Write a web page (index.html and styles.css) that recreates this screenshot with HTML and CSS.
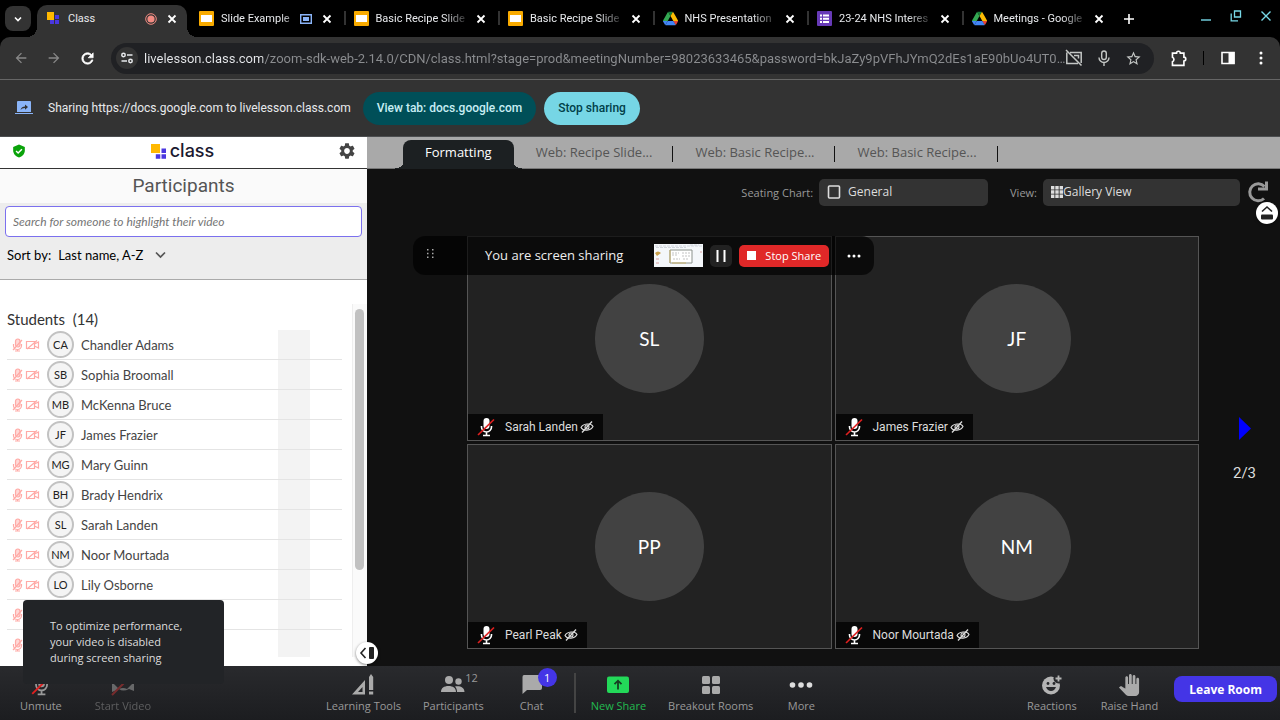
FILE: index.html
```
<!DOCTYPE html>
<html lang="en">
  <head>
    <meta charset="UTF-8" />
    <meta name="viewport" content="width=device-width, initial-scale=1.0" />
    <title>Class</title>
    <link rel="stylesheet" href="styles.css" />
  </head>
  <body>
    <svg class="sprite" aria-hidden="true">
      <symbol id="close" viewBox="0 0 10 10">
        <path d="M1.5 1.5l7 7M8.5 1.5l-7 7" fill="none" stroke="currentColor" stroke-width="1.8" />
      </symbol>
      <symbol id="slides" viewBox="0 0 15 15">
        <rect width="15" height="15" rx="1" fill="#f9ab00" />
        <rect x="2" y="4" width="11" height="7" fill="#fff" />
      </symbol>
      <symbol id="drive" viewBox="0 0 87 78">
        <path d="M6.6 66.85l3.85 6.65c.8 1.4 1.95 2.5 3.3 3.3l13.75-23.8H0c0 1.55.4 3.1 1.2 4.5z" fill="#4285f4" />
        <path d="M43.65 25L29.9 1.2c-1.35.8-2.5 1.9-3.3 3.3L1.2 48.5A9 9 0 0 0 0 53h27.5z" fill="#34a853" />
        <path d="M73.55 76.8c1.35-.8 2.5-1.9 3.3-3.3l8.9-15.5a9 9 0 0 0 1.2-4.5h-27.5l5.85 11.5z" fill="#ea4335" />
        <path d="M43.65 25L57.4 1.2C56.05.4 54.5 0 52.9 0H34.4c-1.6 0-3.15.45-4.5 1.2z" fill="#188038" />
        <path d="M59.8 53H27.5L13.75 76.8c1.35.8 2.9 1.2 4.5 1.2h50.8c1.6 0 3.15-.45 4.5-1.2z" fill="#4285f4" />
        <path d="M73.4 26.5L60.7 4.5c-.8-1.4-1.95-2.5-3.3-3.3L43.65 25 59.8 53h27.45c0-1.55-.4-3.1-1.2-4.5z" fill="#fbbc04" />
      </symbol>
      <symbol id="mic-off" viewBox="0 0 18 20">
        <rect x="6.500" y="1" width="6" height="11" rx="3" fill="currentColor" />
        <path d="M4.500 9v1a5 5 0 0 0 10 0V9M9.500 15v3M6 18.500h7" fill="none" stroke="currentColor" stroke-width="1.600" />
        <path d="M1 18L17 2.500" stroke="#e02020" stroke-width="1.700" />
      </symbol>
      <symbol id="eye-off" viewBox="0 0 14 12">
        <path d="M1 6.500C3 2.500 11 1.500 13 5.500 11 10 3 10.500 1 6.500z" fill="none" stroke="currentColor" stroke-width="1.100" />
        <circle cx="7" cy="6" r="2" fill="none" stroke="currentColor" stroke-width="1.100" />
        <path d="M2 11.500L12 .5" stroke="currentColor" stroke-width="1.300" />
      </symbol>
      <symbol id="muted" viewBox="0 0 28 14">
        <g fill="none" stroke="#ffaaa6" stroke-width="1.200">
          <rect x="3.500" y="1" width="4.500" height="8" rx="2.200" fill="#ffd9d7" />
          <path d="M1.500 6v1.500a4 4 0 0 0 8 0V6M5.500 11.500V13M3 13h5M1 12L10 2" />
          <path d="M14.500 3.500h8v7h-8zM22.500 6l4-2v6l-4-2M15 11L25 2.500" />
        </g>
      </symbol>
    </svg>

    <header class="browser">
      <div class="tabstrip">
        <button class="tab-search" aria-label="Search tabs">
          <svg width="10" height="10" viewBox="0 0 10 10"><path d="M2 3.500l3 3 3-3" fill="none" stroke="#fff" stroke-width="1.600" /></svg>
        </button>
        <div class="tabs">
          <div class="tab active">
            <svg class="favicon" viewBox="0 0 15 15">
              <path d="M1 1h7v8H1z" fill="#ffb800" /><path d="M9 4h4v4H9zM9 9h4v4H9zM4 9h4v4H4z" fill="#4a37e0" />
            </svg>
            <span class="tab-title">Class</span>
            <svg width="12" height="12" viewBox="0 0 12 12"><circle cx="6" cy="6" r="5.300" fill="none" stroke="#f28b82" /><circle cx="6" cy="6" r="3.600" fill="#f28b82" /></svg>
            <button class="tab-close" aria-label="Close tab"><svg width="10" height="10"><use href="#close" /></svg></button>
          </div>
          <div class="tab">
            <svg class="favicon"><use href="#slides" /></svg>
            <span class="tab-title">Slide Example</span>
            <svg width="12" height="10" viewBox="0 0 12 10"><path d="M.7.700h10.600v8.600H.7z" fill="none" stroke="#8ab4f8" stroke-width="1.400" /><path d="M3 3h6v4H3z" fill="#8ab4f8" /></svg>
            <button class="tab-close" aria-label="Close tab"><svg width="10" height="10"><use href="#close" /></svg></button>
          </div>
          <div class="tab">
            <svg class="favicon"><use href="#slides" /></svg>
            <span class="tab-title">Basic Recipe Slide</span>
            <button class="tab-close" aria-label="Close tab"><svg width="10" height="10"><use href="#close" /></svg></button>
          </div>
          <div class="tab">
            <svg class="favicon"><use href="#slides" /></svg>
            <span class="tab-title">Basic Recipe Slide</span>
            <button class="tab-close" aria-label="Close tab"><svg width="10" height="10"><use href="#close" /></svg></button>
          </div>
          <div class="tab">
            <svg class="favicon"><use href="#drive" /></svg>
            <span class="tab-title">NHS Presentation</span>
            <button class="tab-close" aria-label="Close tab"><svg width="10" height="10"><use href="#close" /></svg></button>
          </div>
          <div class="tab">
            <svg class="favicon" viewBox="0 0 15 15"><rect width="15" height="15" rx="1" fill="#673ab7" /><path d="M3 3.500h2v2H3zM6 3.500h6v2H6zM3 6.700h2v2H3zM6 6.700h6v2H6zM3 10h2v2H3zM6 10h6v2H6z" fill="#fff" /></svg>
            <span class="tab-title">23-24 NHS Interes</span>
            <button class="tab-close" aria-label="Close tab"><svg width="10" height="10"><use href="#close" /></svg></button>
          </div>
          <div class="tab">
            <svg class="favicon"><use href="#drive" /></svg>
            <span class="tab-title">Meetings - Google</span>
            <button class="tab-close" aria-label="Close tab"><svg width="10" height="10"><use href="#close" /></svg></button>
          </div>
        </div>
        <button class="new-tab" aria-label="New tab">
          <svg width="10" height="10" viewBox="0 0 10 10"><path d="M5 0v10M0 5h10" stroke="#fff" stroke-width="1.600" /></svg>
        </button>
        <div class="window-controls">
          <button aria-label="Minimize"><svg width="12" height="12" viewBox="0 0 12 12"><path d="M1 10h10" stroke="#78d9e8" stroke-width="1.400" /></svg></button>
          <button aria-label="Restore"><svg width="12" height="12" viewBox="0 0 12 12"><path d="M4.500 1h6v6h-6zM1.200 3.500v7.300H8" fill="none" stroke="#78d9e8" stroke-width="1.300" /></svg></button>
          <button aria-label="Close"><svg width="12" height="12" viewBox="0 0 12 12"><path d="M1.500 1.500l9 9M10.500 1.500l-9 9" stroke="#78d9e8" stroke-width="1.400" /></svg></button>
        </div>
      </div>

      <div class="toolbar">
        <button class="nav dim" aria-label="Back"><svg width="16" height="16" viewBox="0 0 24 24"><path d="M20 11H7.830l5.590-5.590L12 4l-8 8 8 8 1.410-1.410L7.830 13H20v-2z" fill="currentColor" /></svg></button>
        <button class="nav dim" aria-label="Forward"><svg width="16" height="16" viewBox="0 0 24 24"><path d="M4 11h12.170l-5.590-5.590L12 4l8 8-8 8-1.410-1.410L16.170 13H4v-2z" fill="currentColor" /></svg></button>
        <button class="nav" aria-label="Reload"><svg width="17" height="17" viewBox="0 0 24 24"><path d="M17.650 6.350C16.200 4.900 14.210 4 12 4c-4.420 0-7.990 3.580-7.990 8s3.570 8 7.990 8c3.730 0 6.840-2.550 7.730-6h-2.080c-.82 2.330-3.040 4-5.650 4-3.310 0-6-2.690-6-6s2.690-6 6-6c1.660 0 3.140.69 4.220 1.780L13 11h7V4l-2.350 2.350z" fill="currentColor" stroke="currentColor" /></svg></button>
        <div class="omnibox">
          <button class="site-info" aria-label="Site information">
            <svg width="14" height="14" viewBox="0 0 14 14" fill="none" stroke="#e8eaed" stroke-width="1.500"><circle cx="3.500" cy="4" r="1.700" /><path d="M7 4h5.500M1.500 10H7" /><circle cx="10.500" cy="10" r="1.700" /></svg>
          </button>
          <input class="url" type="text" aria-label="Address" value="livelesson.class.com/zoom-sdk-web-2.14.0/CDN/class.html?stage=prod&amp;meetingNumber=98023633465&amp;password=bkJaZy9pVFhJYmQ2dEs1aE90bUo4UT0…" />
          <button aria-label="Camera blocked"><svg width="18" height="18" viewBox="0 0 18 18" fill="none" stroke="currentColor" stroke-width="1.500"><path d="M5 3.500h11.200V14M13 14.500H1.800v-11M1 1l15.500 15.500M9 6.500h4.500v3" /></svg></button>
          <button aria-label="Microphone"><svg width="18" height="18" viewBox="0 0 18 18" fill="none" stroke="currentColor" stroke-width="1.400"><rect x="6.700" y="2" width="4.600" height="8.500" rx="2.300" /><path d="M4 8.500a5 5 0 0 0 10 0M9 13.500V17" /></svg></button>
          <button aria-label="Bookmark"><svg width="17" height="17" viewBox="0 0 24 24"><path d="M22 9.240l-7.190-.62L12 2 9.190 8.630 2 9.240l5.460 4.730L5.820 21 12 17.270 18.180 21l-1.630-7.030L22 9.240zM12 15.400l-3.760 2.270 1-4.280-3.320-2.880 4.380-.38L12 6.100l1.710 4.040 4.380.38-3.320 2.880 1 4.280L12 15.400z" fill="currentColor" /></svg></button>
        </div>
        <button class="nav" aria-label="Extensions"><svg width="18" height="18" viewBox="0 0 22 22"><path d="M3 5h5a2.300 2.300 0 0 1 4.600 0H17v5a2.300 2.300 0 0 1 0 4.600V20H3v-4.500a3 3 0 0 0 0-5.500z" fill="none" stroke="currentColor" stroke-width="2" /></svg></button>
        <span class="toolbar-sep"></span>
        <button class="nav" aria-label="Side panel"><svg width="14" height="14" viewBox="0 0 14 14"><path d="M1 1.500h12v11H1z" fill="none" stroke="currentColor" stroke-width="1.600" /><path d="M7.500 1h6v12h-6z" fill="currentColor" /></svg></button>
        <button class="nav" aria-label="Menu"><svg width="4" height="14" viewBox="0 0 4 14" fill="currentColor"><circle cx="2" cy="2" r="1.500" /><circle cx="2" cy="7" r="1.500" /><circle cx="2" cy="12" r="1.500" /></svg></button>
      </div>

      <div class="infobar">
        <svg width="18" height="14" viewBox="0 0 18 14"><path d="M3 0h12q1 0 1 1v10H2V1q0-1 1-1zM0 12h18v1H0z" fill="#8ab4f8" /><path d="M5.500 9C6 6.500 8 5.500 10 5.500V3.500L13 6l-3 2.700V7C8 7 6.500 7.800 5.500 9z" fill="#333" /></svg>
        <span class="infobar-text">Sharing https://docs.google.com to livelesson.class.com</span>
        <button class="pill view-tab">View tab: docs.google.com</button>
        <button class="pill stop-sharing">Stop sharing</button>
      </div>
    </header>

    <main class="app">
      <aside class="sidebar">
        <div class="brand-bar">
          <svg width="14" height="14" viewBox="0 0 24 24"><path d="M12 1L2 5v6c0 5.550 4.500 10.740 10 12 5.500-1.260 10-6.450 10-12V5l-10-4z" fill="#0aa30a" /><path d="M7 12l3.500 3.500L17 9" fill="none" stroke="#fff" stroke-width="2.500" /></svg>
          <div class="logo">
            <svg width="16" height="15" viewBox="0 0 16 15"><path d="M0 0h9v9H0z" fill="#ffb800" /><path d="M10.500 4.500H15V9h-4.500zM10.500 10.300H15v4.500h-4.500zM4.800 10.300h4.500v4.500H4.800z" fill="#4a37e0" /></svg>
            <span>class</span>
          </div>
          <button class="settings" aria-label="Settings"><svg width="16" height="16" viewBox="2 2 20 20"><path d="M19.140 12.940c.04-.3.060-.61.060-.94 0-.32-.02-.64-.07-.94l2.030-1.580c.18-.14.230-.41.120-.61l-1.920-3.320c-.12-.22-.37-.29-.59-.22l-2.390.96c-.5-.38-1.030-.7-1.620-.94l-.36-2.540c-.04-.24-.24-.41-.48-.41h-3.840c-.24 0-.43.170-.47.410l-.36 2.540c-.59.240-1.130.570-1.620.940l-2.390-.96c-.22-.08-.47 0-.59.220L2.740 8.870c-.12.210-.08.470.120.610l2.030 1.580c-.05.300-.09.630-.09.940s.02.640.070.940l-2.030 1.580c-.18.140-.23.410-.12.610l1.920 3.320c.12.220.37.290.59.220l2.390-.96c.5.380 1.030.7 1.620.94l.36 2.540c.05.240.24.410.48.410h3.840c.24 0 .44-.17.470-.41l.36-2.540c.59-.24 1.130-.56 1.620-.94l2.390.96c.22.080.47 0 .59-.22l1.920-3.320c.12-.22.070-.47-.12-.61l-2.010-1.580zM12 15.600c-1.980 0-3.600-1.620-3.600-3.600s1.620-3.600 3.600-3.600 3.600 1.620 3.600 3.600-1.620 3.600-3.600 3.600z" fill="#444" /></svg></button>
        </div>
        <h1 class="panel-title">Participants</h1>
        <div class="filters">
          <input class="search" type="text" placeholder="Search for someone to highlight their video" aria-label="Search participants" />
          <div class="sort">
            <label for="sort">Sort by:</label>
            <select id="sort"><option>Last name, A-Z</option></select>
            <svg width="11" height="8" viewBox="0 0 11 8"><path d="M1 1.500l4.500 4.500L10 1.500" fill="none" stroke="#555" stroke-width="1.700" /></svg>
          </div>
        </div>
        <div class="roster">
          <div class="roster-list">
            <h2>Students&nbsp; (14)</h2>
            <ul>
              <li><svg class="muted"><use href="#muted" /></svg><span class="initials">CA</span><span>Chandler Adams</span></li>
              <li><svg class="muted"><use href="#muted" /></svg><span class="initials">SB</span><span>Sophia Broomall</span></li>
              <li><svg class="muted"><use href="#muted" /></svg><span class="initials">MB</span><span>McKenna Bruce</span></li>
              <li><svg class="muted"><use href="#muted" /></svg><span class="initials">JF</span><span>James Frazier</span></li>
              <li><svg class="muted"><use href="#muted" /></svg><span class="initials">MG</span><span>Mary Guinn</span></li>
              <li><svg class="muted"><use href="#muted" /></svg><span class="initials">BH</span><span>Brady Hendrix</span></li>
              <li><svg class="muted"><use href="#muted" /></svg><span class="initials">SL</span><span>Sarah Landen</span></li>
              <li><svg class="muted"><use href="#muted" /></svg><span class="initials">NM</span><span>Noor Mourtada</span></li>
              <li><svg class="muted"><use href="#muted" /></svg><span class="initials">LO</span><span>Lily Osborne</span></li>
              <li><svg class="muted"><use href="#muted" /></svg></li>
              <li><svg class="muted"><use href="#muted" /></svg></li>
            </ul>
          </div>
          <div class="scroll-track"><div class="scroll-thumb"></div></div>
        </div>
        <button class="round-toggle collapse-side" aria-label="Collapse panel">
          <svg width="16" height="12" viewBox="0 0 16 12"><path d="M6.500 1L2 6l4.500 5" fill="none" stroke="#222" stroke-width="1.600" /><rect x="10" width="5" height="12" rx="1" fill="#222" /></svg>
        </button>
      </aside>

      <section class="room">
        <nav class="room-tabs">
          <button class="room-tab current">Formatting</button>
          <button class="room-tab">Web: Recipe Slide...</button>
          <button class="room-tab">Web: Basic Recipe...</button>
          <button class="room-tab">Web: Basic Recipe...</button>
        </nav>
        <div class="view-controls">
          <label for="seating">Seating Chart:</label>
          <div class="picker seating">
            <svg width="14" height="14" viewBox="0 0 14 14"><rect x="1.500" y="1" width="11" height="12" rx="1" fill="none" stroke="#ddd" stroke-width="1.600" /></svg>
            <select id="seating"><option>General</option></select>
          </div>
          <label for="view">View:</label>
          <div class="picker view">
            <svg width="12" height="12" viewBox="0 0 12 12" fill="#ddd"><path d="M0 0h3.400v3.400H0zM4.300 0h3.400v3.400H4.300zM8.600 0H12v3.400H8.600zM0 4.300h3.400v3.400H0zM4.300 4.300h3.400v3.400H4.300zM8.600 4.300H12v3.400H8.600zM0 8.600h3.400V12H0zM4.300 8.600h3.400V12H4.300zM8.600 8.600H12V12H8.600z" /></svg>
            <select id="view"><option>Gallery View</option></select>
          </div>
          <button class="refresh" aria-label="Refresh"><svg width="24" height="24" viewBox="0 0 24 24" fill="none" stroke="#999" stroke-width="3"><path d="M18.500 6.500A8.500 8.500 0 1 0 18 18.500M20.500 1.500V9H12" /></svg></button>
        </div>
        <button class="round-toggle collapse-top" aria-label="Collapse controls">
          <svg width="12" height="16" viewBox="0 0 12 16"><path d="M1 6.500L6 2l5 4.500" fill="none" stroke="#222" stroke-width="1.600" /><rect y="9.500" width="12" height="5" rx="1" fill="#222" /></svg>
        </button>

        <div class="stage">
          <div class="gallery">
            <div class="tile"><span class="avatar">SL</span><div class="name"><svg class="mic"><use href="#mic-off" /></svg><span>Sarah Landen</span><svg class="eye"><use href="#eye-off" /></svg></div></div>
            <div class="tile"><span class="avatar">JF</span><div class="name"><svg class="mic"><use href="#mic-off" /></svg><span>James Frazier</span><svg class="eye"><use href="#eye-off" /></svg></div></div>
            <div class="tile"><span class="avatar">PP</span><div class="name"><svg class="mic"><use href="#mic-off" /></svg><span>Pearl Peak</span><svg class="eye"><use href="#eye-off" /></svg></div></div>
            <div class="tile"><span class="avatar">NM</span><div class="name"><svg class="mic"><use href="#mic-off" /></svg><span>Noor Mourtada</span><svg class="eye"><use href="#eye-off" /></svg></div></div>
          </div>
          <div class="pager">
            <button aria-label="Next page"><svg width="12" height="23" viewBox="0 0 12 23"><path d="M0 0l12 11.500L0 23z" fill="#00f" /></svg></button>
            <span>2/3</span>
          </div>
          <div class="share-bar">
            <svg class="grip" width="7" height="12" viewBox="0 0 7 12" fill="#aaa"><path d="M0 1h1.500v1.500H0zM5 1h1.500v1.500H5zM0 4.800h1.500v1.500H0zM5 4.800h1.500v1.500H5zM0 8.600h1.500v1.500H0zM5 8.600h1.500v1.500H5z" /></svg>
            <span class="share-text">You are screen sharing</span>
            <svg class="thumb" width="49" height="23" viewBox="0 0 49 23"><path d="M0 0h49v23H0z" fill="#f4f7fa" /><path d="M1 2h47M2 3.500h30M36 1h9" stroke="#c8cdd6" stroke-width=".8" stroke-dasharray="3 1" /><path d="M1 9q3-3 6 0l-4 3z" fill="#c9a04c" /><path d="M2 15h3M2 19h3M46 8h2" stroke="#d8a0a0" /><path d="M16 6h22v13H16z" fill="#fff" stroke="#8b928c" /><path d="M16 19V6M18 19h14" stroke="#c7b06b" /><path d="M18 9h7M28 9h8M18 11h6M28 12h8M19 15h7M29 15h6" stroke="#b4b4b4" stroke-width=".8" stroke-dasharray="2 1" /></svg>
            <button class="pause" aria-label="Pause share"><svg width="10" height="12" viewBox="0 0 10 12"><path d="M1.500 0v12M8.500 0v12" stroke="#fff" stroke-width="2" /></svg></button>
            <button class="stop-share"><span class="stop-icon"></span>Stop Share</button>
            <button class="more-dots" aria-label="More"><svg width="14" height="4" viewBox="0 0 14 4" fill="#fff"><circle cx="2" cy="2" r="1.500" /><circle cx="7" cy="2" r="1.500" /><circle cx="12" cy="2" r="1.500" /></svg></button>
          </div>
        </div>
      </section>
    </main>

    <footer class="meeting-bar">
      <div class="group media">
        <button class="action"><svg width="20" height="22" viewBox="0 0 18 20"><use href="#mic-off" /></svg>Unmute</button>
        <button class="action" disabled><svg width="24" height="22" viewBox="0 0 24 22"><path d="M1 8l7 7q4-2 8 0l7-7v9l-5-2q-6 3-10 0L1 18z" fill="#aaa" /><path d="M1 21L18 4" stroke="#c33" stroke-width="2" /></svg>Start Video</button>
      </div>
      <div class="group tools">
        <button class="action"><svg width="22" height="22" viewBox="0 0 22 22" fill="#aaa"><path d="M0 20.500L13 6v14.500zM6 18h4.500v-5z" fill-rule="evenodd" /><path d="M17 3l2-3 2.200 3v13H17zM17 17.500h4.200v3H17z" /></svg>Learning Tools</button>
        <button class="action"><svg width="24" height="22" viewBox="0 0 24 22" fill="#aaa"><circle cx="8" cy="6" r="4" /><circle cx="17.500" cy="7.500" r="3.200" /><path d="M0 18c0-4 3-6 7.500-6S15 14 15 18H0zM16 18c0-2-.5-4-2-5.500 5-1 9.500 1 9.500 5.500z" /></svg>Participants<span class="count">12</span></button>
        <button class="action"><svg width="22" height="22" viewBox="0 0 22 22"><path d="M3 1h16q2 0 2 2v11q0 2-2 2H6l-4.500 4V3q0-2 1.500-2z" fill="#aaa" /></svg>Chat<span class="badge">1</span></button>
        <span class="divider"></span>
        <button class="action share"><svg width="22" height="22" viewBox="0 0 22 22"><rect y="2.500" width="22" height="16.500" rx="2" fill="#23d959" /><path d="M11 15.500V7M7.500 10.200L11 6.700l3.500 3.500" fill="none" stroke="#173d22" stroke-width="1.800" /></svg>New Share</button>
        <button class="action"><svg width="20" height="22" viewBox="0 0 20 22" fill="#aaa"><rect x="1" y="2" width="8" height="8" rx="1.500" /><rect x="11" y="2" width="8" height="8" rx="1.500" /><rect x="1" y="12" width="8" height="8" rx="1.500" /><rect x="11" y="12" width="8" height="8" rx="1.500" /></svg>Breakout Rooms</button>
        <button class="action"><svg width="24" height="22" viewBox="0 0 24 22" fill="#ddd"><circle cx="3.500" cy="11" r="2.800" /><circle cx="12" cy="11" r="2.800" /><circle cx="20.500" cy="11" r="2.800" /></svg>More</button>
      </div>
      <div class="group respond">
        <button class="action"><svg width="22" height="22" viewBox="0 0 22 22"><circle cx="10" cy="11.500" r="9" fill="#b4b4b4" /><circle cx="17.500" cy="4.500" r="5" fill="#27282b" /><path d="M17.500 1.500v6M14.500 4.500h6" stroke="#b4b4b4" stroke-width="1.800" /><circle cx="7" cy="9.500" r="1.400" fill="#27282b" /><circle cx="13" cy="9.500" r="1.400" fill="#27282b" /><path d="M5 13h10q-1.500 4-5 4t-5-4z" fill="#27282b" /></svg>Reactions</button>
        <button class="action"><svg width="22" height="22" viewBox="0 0 24 24"><path d="M23 5.500V20c0 2.200-1.800 4-4 4h-7.300c-1.080 0-2.100-.43-2.850-1.190L1 14.830s1.260-1.230 1.300-1.250c.22-.19.490-.29.790-.29.220 0 .42.060.6.160.040.010 4.310 2.460 4.310 2.460V4c0-.83.67-1.500 1.500-1.500S11 3.170 11 4v7h1V1.500c0-.83.67-1.500 1.500-1.500S15 .67 15 1.500V11h1V2.500c0-.83.67-1.500 1.500-1.500s1.500.67 1.500 1.500V11h1V5.500c0-.83.67-1.500 1.500-1.500s1.500.67 1.500 1.500z" fill="#aaa" /></svg>Raise Hand</button>
        <button class="leave">Leave Room</button>
      </div>
      <div class="notice" role="status">To optimize performance, your video is disabled during screen sharing</div>
    </footer>
  </body>
</html>
```
FILE: styles.css
```
* {
  padding: 0;
  margin: 0;
  box-sizing: border-box;
}

body {
  display: flex;
  flex-direction: column;
  height: 100vh;
  overflow: hidden;
  background-color: #111;
  font-family: "Open Sans", sans-serif;
}

button,
select,
input {
  border: none;
  background: none;
  font: inherit;
  color: inherit;
}

button {
  display: flex;
  align-items: center;
  justify-content: center;
  white-space: nowrap;
  cursor: pointer;
}

select {
  appearance: none;
  outline: none;
}

svg {
  display: block;
  flex-shrink: 0;
}

.sprite {
  position: absolute;
  width: 0;
  height: 0;
}

/* browser */
.browser {
  flex-shrink: 0;
  background-color: #000;
  font-family: Roboto, sans-serif;
  color: #e8eaed;
}

.tabstrip {
  display: flex;
  height: 37px;
  padding-left: 5px;
}

.tab-search {
  width: 26px;
  height: 25px;
  margin: 6px 6px 0 0;
  border-radius: 8px;
  background-color: #333;
}

.tabs {
  display: flex;
  flex: 0 1 1077px;
  min-width: 0;
}

.tab {
  position: relative;
  display: flex;
  align-items: center;
  flex: 1 1 0;
  min-width: 0;
  padding: 0 10px 0 12px;
  font-size: 11px;
}

.tab + .tab:not(:nth-child(2))::before {
  content: "";
  position: absolute;
  left: 2px;
  top: 11px;
  width: 2px;
  height: 14px;
  background-color: #333;
}

.tab.active {
  flex: 0 1 150px;
  margin-top: 5px;
  padding: 0 10px 5px 9px;
  border-radius: 10px 10px 0 0;
  background-color: #333;
}

.tab.active::before,
.tab.active::after {
  content: "";
  position: absolute;
  bottom: 0;
  width: 10px;
  height: 10px;
}

.tab.active::before {
  left: -10px;
  background: radial-gradient(circle at 0 0, transparent 10px, #333 10px);
}

.tab.active::after {
  right: -10px;
  background: radial-gradient(circle at 100% 0, transparent 10px, #333 10px);
}

.favicon {
  width: 15px;
  height: 15px;
  margin-right: 7px;
}

.tab-title {
  flex: 1;
  overflow: hidden;
  white-space: nowrap;
  -webkit-mask-image: linear-gradient(90deg, #000 75%, transparent 105%);
  mask-image: linear-gradient(90deg, #000 75%, transparent 105%);
}

.tab.active .tab-title {
  -webkit-mask-image: none;
  mask-image: none;
}

.tab-close {
  width: 10px;
  height: 16px;
  margin-left: 10px;
  color: #fff;
}

.new-tab {
  width: 30px;
}

.window-controls {
  display: flex;
  gap: 18px;
  height: 32px;
  margin: 0 8px 0 auto;
}

.toolbar {
  display: flex;
  align-items: center;
  height: 42px;
  padding: 0 10px 0 12px;
  border-radius: 10px 10px 0 0;
  background-color: #333;
}

.nav {
  width: 18px;
  height: 24px;
  margin-right: 15px;
  color: #fff;
}

.nav.dim {
  color: #888;
}

.nav:last-child {
  margin-right: 0;
}

.omnibox {
  display: flex;
  flex: 1;
  align-items: center;
  gap: 12px;
  min-width: 0;
  height: 31px;
  margin-right: 16px;
  padding: 0 12px 0 5px;
  border-radius: 16px;
  background-color: #202124;
  color: #c4c7c5;
}

.site-info {
  width: 22px;
  height: 22px;
  margin-right: -6px;
  border-radius: 50%;
  background-color: #333;
}

.url {
  flex: 1;
  min-width: 0;
  margin-right: -12px;
  background: linear-gradient(90deg, #e8eaed 119px, #8b8d90 119px);
  -webkit-background-clip: text;
  background-clip: text;
  color: transparent;
  font-size: 13px;
}

.toolbar-sep {
  width: 1px;
  height: 14px;
  margin-right: 15px;
  background-color: #000;
}

.infobar {
  display: flex;
  align-items: center;
  height: 58px;
  padding-left: 15px;
  border-top: 1px solid #666;
  border-bottom: 1px solid #4c4e50;
  background-color: #333;
  font-size: 12px;
}

.infobar-text {
  margin: 0 12px 0 15px;
}

.pill {
  height: 33px;
  margin-right: 8px;
  padding: 0 14px;
  border-radius: 17px;
  font-weight: 500;
}

.view-tab {
  background-color: #004f58;
  color: #c8eef4;
}

.stop-sharing {
  background-color: #76d6e5;
  color: #004049;
}

/* participants panel */
.app {
  display: flex;
  flex: 1;
  min-height: 0;
}

.sidebar {
  position: relative;
  display: flex;
  flex: 0 0 367px;
  flex-direction: column;
  background-color: #fff;
  font-family: Lato, sans-serif;
}

.brand-bar {
  display: flex;
  align-items: center;
  justify-content: space-between;
  height: 32px;
  padding: 0 12px;
  padding-bottom: 3px;
  border-bottom: 1px solid #333;
}

.logo {
  display: flex;
  align-items: center;
  gap: 3px;
  color: #1b1930;
  font-size: 18px;
  font-weight: 500;
  line-height: 20px;
  font-family: Inter, sans-serif;
}

.panel-title {
  background-color: #fafafa;
  color: #555;
  font: 400 19px/34px Roboto, sans-serif;
  text-align: center;
}

.filters {
  padding: 3px 5px 7px;
  border-bottom: 1px solid #aaa;
  background-color: #ededed;
}

.search {
  display: block;
  width: 100%;
  height: 31px;
  padding: 0 7px;
  border: 1px solid #7b70ee;
  border-radius: 4px;
  background-color: #fff;
  font-size: 12px;
  color: #333;
}

.search::placeholder {
  font-style: italic;
  color: #757575;
}

.sort {
  display: flex;
  align-items: center;
  height: 35px;
  padding-left: 2px;
  font-size: 13px;
}

.sort select {
  margin: 0 11px 0 7px;
}

.roster {
  display: flex;
  flex: 1;
  min-height: 0;
  margin: 24px 0 9px;
}

.roster-list {
  flex: 1;
  padding: 0 10px 0 7px;
  overflow: hidden;
}

.roster h2 {
  color: #333;
  font-size: 15px;
  font-weight: 400;
  line-height: 30px;
  height: 26px;
}

.roster ul {
  list-style: none;
  background: linear-gradient(#f3f3f3, #f3f3f3) right 32px top / 32px 100% no-repeat;
}

.roster li {
  display: flex;
  align-items: center;
  height: 30px;
  padding-left: 5px;
  border-bottom: 1px solid #e4e4e4;
  color: #444;
  font-size: 13px;
}

.muted {
  width: 28px;
  height: 14px;
  margin-right: 7px;
}

.initials {
  width: 27px;
  height: 27px;
  margin-right: 7px;
  border: 2px solid #c2c2c2;
  border-radius: 50%;
  background-color: #f4f4f4;
  color: #222;
  font-size: 11px;
  line-height: 23px;
  text-align: center;
}

.scroll-track {
  width: 15px;
  padding: 5px 3px 5px 2px;
  border-left: 1px solid #eee;
  background-color: #fafafa;
}

.scroll-thumb {
  height: 76%;
  border-radius: 5px;
  background-color: #c1c1c1;
}

.round-toggle {
  position: absolute;
  z-index: 2;
  width: 22px;
  height: 22px;
  border-radius: 50%;
  background-color: #fff;
  box-shadow: 0 1px 3px rgba(0, 0, 0, 0.5);
}

.collapse-side {
  right: -11px;
  bottom: 2px;
}

.collapse-top {
  top: 65px;
  right: 2px;
}

/* room */
.room {
  position: relative;
  display: flex;
  flex: 1;
  flex-direction: column;
  min-width: 0;
  color: #ddd;
}

.room-tabs {
  display: flex;
  height: 32px;
  padding: 3px 0 0 36px;
  border-bottom: 1px solid #777;
  background-color: #a9a9a9;
}

.room-tab {
  position: relative;
  height: 24px;
  padding: 0 21px 0 22px;
  color: #555;
  font-size: 13px;
}

.room-tab:not(.current)::after {
  content: "";
  position: absolute;
  top: 6px;
  right: 0;
  width: 1px;
  height: 16px;
  background-color: #111;
}

.room-tab.current {
  height: 29px;
  padding: 0 22px 5px;
  border-radius: 8px 8px 0 0;
  background-color: #1c2022;
  color: #fff;
}

.room-tab.current::before,
.room-tab.current::after {
  content: "";
  position: absolute;
  bottom: 0;
  width: 14px;
  height: 5px;
}

.room-tab.current::before {
  right: 100%;
  background: radial-gradient(ellipse at 0 0, transparent 70%, #1c2022 71%);
}

.room-tab.current::after {
  left: 100%;
  background: radial-gradient(ellipse at 100% 0, transparent 70%, #1c2022 71%);
}

.view-controls {
  display: flex;
  align-items: center;
  justify-content: flex-end;
  height: 46px;
  padding-right: 10px;
  font-size: 11px;
  color: #999;
}

.picker {
  display: flex;
  align-items: center;
  height: 27px;
  margin: 0 22px 0 6px;
  padding: 0 8px;
  border-radius: 5px;
  background-color: #333;
  color: #ddd;
  font-size: 12px;
}

.picker select {
  flex: 1;
  min-width: 0;
  padding-bottom: 2px;
}

.seating {
  width: 169px;
}

.seating select {
  margin-left: 7px;
}

.view {
  width: 197px;
  margin-right: 6px;
}

.stage {
  position: relative;
  display: flex;
  flex: 1;
  min-height: 0;
  padding: 21px 0 17px 100px;
}

.gallery {
  display: grid;
  flex: 1;
  grid-template-columns: 1fr 1fr;
  grid-template-rows: 1fr 1fr;
  gap: 3px;
}

.tile {
  position: relative;
  display: flex;
  align-items: center;
  justify-content: center;
  border: 1px solid #555;
  background-color: #222;
}

.avatar {
  width: 109px;
  height: 109px;
  border-radius: 50%;
  background-color: #424242;
  color: #fff;
  font: 19px/109px Lato, sans-serif;
  text-align: center;
}

.name {
  position: absolute;
  left: 0;
  bottom: 0;
  display: flex;
  align-items: center;
  height: 26px;
  padding: 0 9px;
  background-color: #080808;
  font: 12px Roboto, sans-serif;
}

.mic {
  width: 18px;
  height: 20px;
  margin-right: 10px;
  color: #fff;
}

.eye {
  width: 14px;
  height: 12px;
  margin-left: 2px;
}

.pager {
  display: flex;
  flex-direction: column;
  align-items: center;
  justify-content: center;
  gap: 24px;
  width: 81px;
  padding: 14px 0 0 10px;
  font: 15px Roboto, sans-serif;
}

.share-bar {
  position: absolute;
  left: 46px;
  top: 21px;
  display: flex;
  align-items: center;
  height: 39px;
  padding: 0 13px 0 14px;
  border-radius: 12px;
  background-color: rgba(0, 0, 0, 0.65);
  color: #eee;
  font-size: 13px;
}

.grip {
  margin-bottom: 4px;
}

.share-text {
  margin: 0 31px 2px 51px;
}

.pause {
  width: 22px;
  height: 22px;
  margin: 0 7px;
  border-radius: 5px;
  background-color: #222;
}

.stop-share {
  height: 22px;
  padding: 0 8px;
  border-radius: 5px;
  background-color: #e02828;
  color: #fff;
  font-size: 11px;
}

.stop-icon {
  width: 9px;
  height: 9px;
  margin-right: 9px;
  background-color: #fff;
}

.more-dots {
  margin-left: 18px;
}

/* bottom bar */
.meeting-bar {
  position: relative;
  display: flex;
  flex-shrink: 0;
  height: 54px;
  background: linear-gradient(#292a2d, #1c1d20);
  color: #999;
  font-size: 11px;
}

.group {
  display: flex;
}

.action {
  position: relative;
  flex-direction: column;
  gap: 2px;
  padding: 2px 0 0;
  color: #999;
  line-height: 16px;
}

.action:disabled {
  opacity: 0.5;
}

.media {
  gap: 33px;
  width: 326px;
  padding-left: 20px;
}

.tools {
  gap: 22px;
}

.tools .action {
  min-width: 52px;
}

.divider {
  align-self: center;
  width: 2px;
  height: 40px;
  margin: 0 -7px 0 -6px;
  background-color: #444;
}

.action.share {
  color: #22bb50;
}

.count {
  position: absolute;
  top: 4px;
  left: calc(50% + 12px);
}

.badge {
  position: absolute;
  top: 2px;
  left: calc(50% + 6px);
  width: 19px;
  height: 19px;
  border-radius: 50%;
  background-color: #4435e6;
  color: #fff;
  line-height: 19px;
  text-align: center;
}

.respond {
  gap: 24px;
  margin-left: auto;
  padding-right: 3px;
}

.leave {
  height: 26px;
  margin: 10px 0 0 -8px;
  padding: 0 15px;
  border-radius: 8px;
  background-color: #4435e6;
  color: #fff;
  font-size: 12px;
  font-weight: 700;
}

.notice {
  position: absolute;
  left: 23px;
  bottom: 36px;
  width: 201px;
  padding: 18px 36px 18px 27px;
  border-radius: 4px;
  background-color: #222427;
  color: #ddd;
  line-height: 16px;
}
```
